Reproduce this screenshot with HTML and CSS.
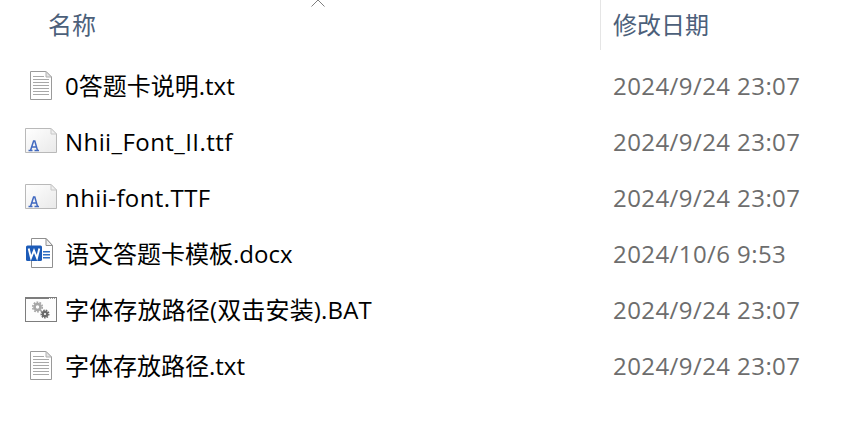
FILE: index.html
```html
<!DOCTYPE html>
<html lang="zh">
<head>
<meta charset="utf-8">
<title>文件列表</title>
<link rel="stylesheet" href="styles.css">
</head>
<body>
<svg class="defs" width="0" height="0" aria-hidden="true">
  <defs>
    <linearGradient id="ttfg" x1="0" y1="0" x2="1" y2="1"><stop offset="0" stop-color="#ffffff"/><stop offset="1" stop-color="#e9e9e9"/></linearGradient>
    <symbol id="txt" viewBox="0 0 32 32">
      <path d="M5.5 1.5H21L26.5 7V29.5H5.5Z" fill="#fff" stroke="#9a9a9a"/>
      <path d="M21 1.5V7H26.5Z" fill="#e4e4e4" stroke="#b0b0b0"/>
      <path d="M8 6.5H19M8 9.5H24M8 12.5H24M8 15.5H24M8 18.5H24M8 21.5H24M8 24.5H24" stroke="#a8a8a8" fill="none"/>
    </symbol>
    <symbol id="ttf" viewBox="0 0 32 25">
      <path d="M.5.5H26L31.5 6V24.5H.5Z" fill="url(#ttfg)" stroke="#b9b9b9"/>
      <path d="M26 .5V6H31.5Z" fill="#efefef" stroke="#c8c8c8"/>
      <path d="M3.5 22.4H7.5M9.5 22.4H14M5.5 22.4 8.6 13H9.8L12.5 22.4M6.6 19H11.4" fill="none" stroke="#4169c0" stroke-width="1.5"/>
    </symbol>
    <symbol id="word" viewBox="0 0 28 30">
      <path d="M5.5.5H20L26.5 7.5V29.5H5.5Z" fill="#fff" stroke="#8f8f8f"/>
      <path d="M20 .5V7.5H26.5Z" fill="#f0f0f0" stroke="#8f8f8f"/>
      <rect x="17" y="13" width="7" height="1.5" fill="#2f6fc4"/>
      <rect x="17" y="16" width="7" height="1.5" fill="#2f6fc4"/>
      <rect x="17" y="19" width="7" height="1.5" fill="#2f6fc4"/>
      <rect x="0" y="7.5" width="16" height="15.5" rx="1.5" fill="#1c5bb8"/>
      <path d="M2.7 10.5 5 20 8 12.5 11 20 13.3 10.5" fill="none" stroke="#fff" stroke-width="1.9"/>
    </symbol>
    <symbol id="bat" viewBox="0 0 32 25">
      <rect x=".5" y=".5" width="31" height="24" fill="#fdfdfd" stroke="#7d7d7d"/>
      <path d="M1 1.5H24" stroke="#7d7d7d" fill="none"/>
      <path d="M25 1.5H31" stroke="#a0a0a0" stroke-dasharray="1 1" fill="none"/>
      <circle cx="12.5" cy="10" r="3" fill="none" stroke="#a6a6a6" stroke-width="2.6"/>
      <circle cx="12.5" cy="10" r="4.8" fill="none" stroke="#a6a6a6" stroke-width="1.6" stroke-dasharray="1.8 1.2"/>
      <circle cx="20" cy="17" r="2.2" fill="none" stroke="#6b6b6b" stroke-width="2.2"/>
      <circle cx="20" cy="17" r="3.8" fill="none" stroke="#6b6b6b" stroke-width="1.4" stroke-dasharray="1.6 1"/>
    </symbol>
  </defs>
</svg>
<main class="list">
  <svg class="sort" width="16" height="7" viewBox="0 0 16 7" aria-hidden="true"><path d="M1.5 6.5 8 0 14.5 6.5" fill="none" stroke="#7f7f7f"/></svg>
  <header class="head">
    <div class="col-name">名称</div>
    <div class="col-date">修改日期</div>
  </header>
  <div class="row">
    <span class="icon"><svg class="i-txt"><use href="#txt"/></svg></span>
    <span class="name">0答题卡说明.txt</span>
    <span class="date">2024/9/24 23:07</span>
  </div>
  <div class="row">
    <span class="icon"><svg class="i-ttf"><use href="#ttf"/></svg></span>
    <span class="name latin">Nhii_Font_II.ttf</span>
    <span class="date">2024/9/24 23:07</span>
  </div>
  <div class="row">
    <span class="icon"><svg class="i-ttf"><use href="#ttf"/></svg></span>
    <span class="name latin">nhii-font.TTF</span>
    <span class="date">2024/9/24 23:07</span>
  </div>
  <div class="row">
    <span class="icon"><svg class="i-word"><use href="#word"/></svg></span>
    <span class="name">语文答题卡模板.docx</span>
    <span class="date">2024/10/6 9:53</span>
  </div>
  <div class="row">
    <span class="icon"><svg class="i-bat"><use href="#bat"/></svg></span>
    <span class="name wide">字体存放路径(双击安装).BAT</span>
    <span class="date">2024/9/24 23:07</span>
  </div>
  <div class="row">
    <span class="icon"><svg class="i-txt"><use href="#txt"/></svg></span>
    <span class="name">字体存放路径.txt</span>
    <span class="date">2024/9/24 23:07</span>
  </div>
</main>
</body>
</html>
```
FILE: styles.css
```css
html, body {
  margin: 0;
  padding: 0;
  background: #fff;
}
body {
  width: 856px;
  height: 424px;
  overflow: hidden;
  font-family: "Open Sans", "Noto Sans CJK SC", sans-serif;
  font-size: 24px;
}
.defs {
  position: absolute;
}
.list {
  position: relative;
}
.sort {
  position: absolute;
  left: 310px;
  top: 0;
}
.head {
  display: grid;
  grid-template-columns: 600px 1fr;
  height: 48px;
  margin-bottom: 10px;
  color: #4c607a;
}
.col-name {
  padding-left: 48px;
  line-height: 50px;
}
.col-date {
  border-left: 1px solid #e5e5e5;
  padding-left: 12px;
  line-height: 50px;
}
.row {
  display: grid;
  grid-template-columns: 65px 548px 1fr;
  height: 56px;
  align-items: center;
  line-height: 56px;
}
.icon {
  display: flex;
  padding-left: 25px;
}
.icon svg {
  display: block;
}
.name {
  color: #000;
  white-space: nowrap;
}
.latin {
  letter-spacing: 0.42px;
}
.wide {
  letter-spacing: 0.16px;
}
.date {
  color: #6d6d6d;
  white-space: nowrap;
  letter-spacing: 0.42px;
}
.i-txt {
  width: 32px;
  height: 32px;
}
.i-ttf {
  width: 32px;
  height: 25px;
  margin-bottom: 4px;
}
.i-bat {
  width: 32px;
  height: 25px;
  margin-bottom: 2px;
}
.i-word {
  width: 28px;
  height: 30px;
  margin-left: 1px;
  margin-bottom: 2px;
}
```
